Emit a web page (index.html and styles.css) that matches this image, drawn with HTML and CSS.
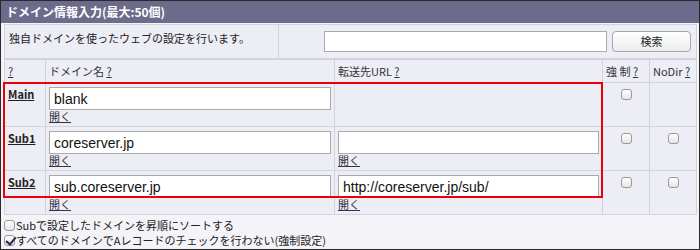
FILE: index.html
```html
<!DOCTYPE html>
<html>
<head>
    <title>ドメイン情報入力</title>
    <meta charset="UTF-8">
    <link rel="stylesheet" href="styles.css">
</head>
<body>
    <div class="panel">
        <div class="panel-title">ドメイン情報入力(最大:50個)</div>
        <div class="panel-body">
            <table class="intro">
                <tr>
                    <td class="intro-text">独自ドメインを使ったウェブの設定を行います。</td>
                    <td class="intro-search">
                        <input type="text" class="search-input">
                        <button type="button" class="search-btn">検索</button>
                    </td>
                </tr>
            </table>

            <table class="domains">
                <colgroup>
                    <col class="col-label">
                    <col class="col-domain">
                    <col class="col-url">
                    <col class="col-flag">
                    <col class="col-flag">
                </colgroup>
                <tr>
                    <th><a href="#" class="help">?</a></th>
                    <th>ドメイン名 <a href="#" class="help">?</a></th>
                    <th>転送先URL <a href="#" class="help">?</a></th>
                    <th>強 制 <a href="#" class="help">?</a></th>
                    <th>NoDir <a href="#" class="help">?</a></th>
                </tr>
                <tr>
                    <td class="label"><a href="#">Main</a></td>
                    <td>
                        <input type="text" class="field" value="blank">
                        <a href="#" class="open">開く</a>
                    </td>
                    <td></td>
                    <td class="flag"><input type="checkbox" class="box"></td>
                    <td class="flag"></td>
                </tr>
                <tr>
                    <td class="label"><a href="#">Sub1</a></td>
                    <td>
                        <input type="text" class="field" value="coreserver.jp">
                        <a href="#" class="open">開く</a>
                    </td>
                    <td>
                        <input type="text" class="field" value="">
                        <a href="#" class="open">開く</a>
                    </td>
                    <td class="flag"><input type="checkbox" class="box"></td>
                    <td class="flag"><input type="checkbox" class="box"></td>
                </tr>
                <tr>
                    <td class="label"><a href="#">Sub2</a></td>
                    <td>
                        <input type="text" class="field" value="sub.coreserver.jp">
                        <a href="#" class="open">開く</a>
                    </td>
                    <td>
                        <input type="text" class="field" value="http://coreserver.jp/sub/">
                        <a href="#" class="open">開く</a>
                    </td>
                    <td class="flag"><input type="checkbox" class="box"></td>
                    <td class="flag"><input type="checkbox" class="box"></td>
                </tr>
            </table>

            <div class="options">
                <label class="option"><input type="checkbox" class="box">Subで設定したドメインを昇順にソートする</label>
                <label class="option"><input type="checkbox" class="box" checked>すべてのドメインでAレコードのチェックを行わない(強制設定)</label>
            </div>

            <!-- annotation frame drawn over the domain rows -->
            <div class="highlight"></div>
        </div>
    </div>
</body>
</html>
```

FILE: styles.css
```css
body {
    margin: 0;
    font-family: "Noto Sans CJK JP", sans-serif;
    font-size: 11px;
    line-height: 13px;
    color: #222;
    background: #fff;
}

.panel {
    width: 700px;
    height: 250px;
    box-sizing: border-box;
    border: 1px solid #2a2a2a;
    background: #f3f3f8;
    overflow: hidden;
}

.panel-title {
    height: 22px;
    line-height: 22px;
    padding-left: 5px;
    background: #6c6b8c;
    color: #fff;
    font-weight: bold;
    font-size: 12px;
}

.panel-body {
    position: relative;
    padding: 1px 2px 0 3px;
}

table {
    width: 100%;
    border-collapse: collapse;
    table-layout: fixed;
}

td, th {
    border: 1px solid #d3d3db;
    background: #ededf5;
    vertical-align: top;
}

/* intro row */
.intro-text {
    width: 265px;
    padding: 6px 4px 0 4px;
    line-height: 14px;
}

.intro-search {
    text-align: right;
    padding: 6px 5px 6px 0;
    font-size: 0;
    line-height: 0;
}

.search-input {
    width: 283px;
    height: 21px;
    box-sizing: border-box;
    border: 1px solid #a9a9a9;
    vertical-align: top;
    margin: 0;
    background: #fff;
}

.search-btn {
    width: 79px;
    height: 21px;
    margin: 0 0 0 5px;
    vertical-align: top;
    border: 1px solid #a6a6a6;
    border-radius: 4px;
    background: linear-gradient(#ffffff, #ececec);
    font-family: "Noto Sans CJK JP", sans-serif;
    font-size: 11px;
    line-height: 19px;
    color: #222;
    padding: 0;
}

/* domain table */
.col-label { width: 41px; }
.col-domain { width: 289px; }
.col-url { width: 268px; }
.col-flag { width: 47px; }

.domains th {
    height: 22px;
    padding: 0 0 0 3px;
    text-align: left;
    font-weight: normal;
    vertical-align: middle;
    line-height: 22px;
    color: #333;
}

.domains td {
    padding: 4px 3px 3px 3px;
}

a {
    color: #333;
}

.label a {
    font-weight: bold;
    color: #222;
    display: inline-block;
    margin-top: 1px;
}

.field {
    display: block;
    width: 100%;
    height: 23px;
    box-sizing: border-box;
    margin: 0;
    padding: 0 4px;
    border: 1px solid #a9a9a9;
    background: #fff;
    font-family: "Liberation Sans", "Noto Sans CJK JP", sans-serif;
    font-size: 14px;
    color: #111;
}

.open {
    display: inline-block;
    color: #334;
}

.flag {
    text-align: center;
}

.box {
    appearance: none;
    -webkit-appearance: none;
    width: 11px;
    height: 11px;
    margin: 2px 0 0 0;
    border: 1px solid #9a9a9a;
    border-radius: 3px;
    background: linear-gradient(#ffffff, #e4e4e4);
    position: relative;
    vertical-align: top;
}

.box:checked::after {
    content: "";
    position: absolute;
    left: 3px;
    top: -1px;
    width: 4px;
    height: 8px;
    border: solid #1f2a55;
    border-width: 0 2px 2px 0;
    transform: rotate(40deg);
}

/* options below the table */
.options {
    padding-top: 3px;
}

.option {
    display: flex;
    align-items: center;
    height: 15px;
}

.option .box {
    margin: 0 1px 0 0;
}

.highlight {
    position: absolute;
    left: 2px;
    top: 59px;
    width: 596px;
    height: 112px;
    border: 2px solid #e8000b;
    pointer-events: none;
}
```
